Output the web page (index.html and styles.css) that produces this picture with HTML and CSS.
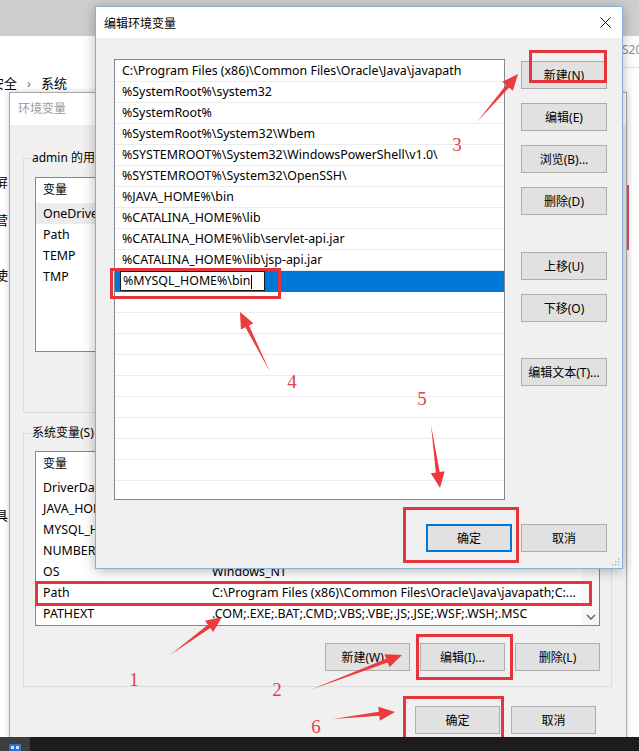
FILE: index.html
```html
<!DOCTYPE html>
<html lang="zh-CN">
<head>
<meta charset="utf-8">
<title>编辑环境变量</title>
<link rel="stylesheet" href="styles.css">
</head>
<body>
<div class="screen">
  <div class="workspace">
    <div class="settings">
      <div class="settings-top"></div>
      <div class="settings-head"><span class="settings-ver">S20</span></div>
      <div class="crumb"><span>安全</span><span class="crumb-sep">›</span><span>系统</span></div>
      <ul class="nav">
        <li class="nav-a">屏</li>
        <li class="nav-b">营</li>
        <li class="nav-c">使</li>
        <li class="nav-d">具</li>
      </ul>
    </div>

    <section class="win win-env">
      <header class="env-title">环境变量</header>
      <div class="env-body">
        <fieldset class="group group-user">
          <legend>admin 的用户变量(U)</legend>
          <div class="lv">
            <div class="lv-main">
              <div class="lv-row lv-head"><span>变量</span><span></span></div>
              <div class="lv-row lv-sel"><span>OneDrive</span><span></span></div>
              <div class="lv-row"><span>Path</span><span></span></div>
              <div class="lv-row"><span>TEMP</span><span></span></div>
              <div class="lv-row"><span>TMP</span><span></span></div>
            </div>
          </div>
        </fieldset>

        <fieldset class="group group-sys">
          <legend>系统变量(S)</legend>
          <div class="lv">
            <div class="lv-main">
              <div class="lv-row lv-head"><span>变量</span><span></span></div>
              <div class="lv-row"><span>DriverData</span><span></span></div>
              <div class="lv-row"><span>JAVA_HOME</span><span></span></div>
              <div class="lv-row"><span>MYSQL_HOME</span><span></span></div>
              <div class="lv-row"><span>NUMBER_OF_PROCESSORS</span><span></span></div>
              <div class="lv-row"><span>OS</span><span>Windows_NT</span></div>
              <div class="lv-row"><span>Path</span><span>C:\Program Files (x86)\Common Files\Oracle\Java\javapath;C:...</span></div>
              <div class="lv-row"><span>PATHEXT</span><span>.COM;.EXE;.BAT;.CMD;.VBS;.VBE;.JS;.JSE;.WSF;.WSH;.MSC</span></div>
            </div>
            <div class="lv-scroll">
              <div class="lv-scroll-btn">
                <svg class="chev" width="10" height="6" viewBox="0 0 10 6"><polyline points="1,1 5,5 9,1"/></svg>
              </div>
            </div>
          </div>
          <div class="btn-row">
            <button class="btn">新建(W)...</button>
            <button class="btn">编辑(I)...</button>
            <button class="btn">删除(L)</button>
          </div>
        </fieldset>

        <div class="env-foot">
          <button class="btn">确定</button>
          <button class="btn">取消</button>
        </div>
      </div>
    </section>

    <section class="win win-edit">
      <header class="edit-title">
        <span>编辑环境变量</span>
        <svg class="close" width="11" height="11" viewBox="0 0 11 11"><line x1="0.5" y1="0.5" x2="10.5" y2="10.5"/><line x1="10.5" y1="0.5" x2="0.5" y2="10.5"/></svg>
      </header>
      <div class="edit-body">
        <div class="edit-main">
          <div class="elist">
            <div class="erow">C:\Program Files (x86)\Common Files\Oracle\Java\javapath</div>
            <div class="erow">%SystemRoot%\system32</div>
            <div class="erow">%SystemRoot%</div>
            <div class="erow">%SystemRoot%\System32\Wbem</div>
            <div class="erow">%SYSTEMROOT%\System32\WindowsPowerShell\v1.0\</div>
            <div class="erow">%SYSTEMROOT%\System32\OpenSSH\</div>
            <div class="erow">%JAVA_HOME%\bin</div>
            <div class="erow">%CATALINA_HOME%\lib</div>
            <div class="erow">%CATALINA_HOME%\lib\servlet-api.jar</div>
            <div class="erow">%CATALINA_HOME%\lib\jsp-api.jar</div>
            <div class="erow erow-sel"><span class="eedit">%MYSQL_HOME%\bin<span class="caret"></span></span></div>
            <div class="erow"></div>
            <div class="erow"></div>
            <div class="erow"></div>
            <div class="erow"></div>
            <div class="erow"></div>
            <div class="erow"></div>
            <div class="erow"></div>
            <div class="erow"></div>
            <div class="erow"></div>
            <div class="erow"></div>
            <div class="erow"></div>
          </div>
          <div class="ebtns">
            <button class="btn">新建(N)</button>
            <button class="btn">编辑(E)</button>
            <button class="btn">浏览(B)...</button>
            <button class="btn">删除(D)</button>
            <button class="btn ebtn-gap1">上移(U)</button>
            <button class="btn">下移(O)</button>
            <button class="btn ebtn-gap2">编辑文本(T)...</button>
          </div>
        </div>
        <div class="edit-foot">
          <button class="btn btn-default">确定</button>
          <button class="btn">取消</button>
        </div>
      </div>
      <svg class="grip" width="9" height="9" viewBox="0 0 9 9">
        <rect x="7" y="1" width="1.5" height="1.5"/>
        <rect x="4" y="4" width="1.5" height="1.5"/><rect x="7" y="4" width="1.5" height="1.5"/>
        <rect x="1" y="7" width="1.5" height="1.5"/><rect x="4" y="7" width="1.5" height="1.5"/><rect x="7" y="7" width="1.5" height="1.5"/>
      </svg>
    </section>

    <svg class="marks" width="639" height="737" viewBox="0 0 639 737">
      <line class="mk-edge" x1="628" y1="185" x2="628" y2="250"/>
      <rect class="mk-box" x="530.5" y="51.5" width="75" height="30"/>
      <rect class="mk-box" x="111.5" y="269.5" width="168" height="28"/>
      <rect class="mk-box" x="404.5" y="508.5" width="113" height="53"/>
      <rect class="mk-box" x="36.5" y="582.5" width="554" height="22"/>
      <rect class="mk-box" x="417.5" y="635.5" width="94" height="43"/>
      <rect class="mk-box" x="404.5" y="697.5" width="98" height="50"/>
      <polygon class="mk-arrow" points="477,122 509.1,87.5 512.9,90.8 518,74 502.3,81.7 506.1,84.9"/>
      <polygon class="mk-arrow" points="270,372 249,325.4 253.4,323.2 240,312 240.9,329.4 245.4,327.2"/>
      <polygon class="mk-arrow" points="431,425 435.8,472.4 430.8,473.2 440,488 444.7,471.2 439.7,471.9"/>
      <polygon class="mk-arrow" points="170,655 210.3,628 213.2,632.1 222,617 205,620.8 207.9,624.8"/>
      <polygon class="mk-arrow" points="310,690 387.7,662.6 389.5,667.2 402,655 384.5,654.2 386.3,658.8"/>
      <polygon class="mk-arrow" points="333,719 379.3,715.8 379.9,720.8 395,712 378.3,706.8 378.9,711.8"/>
      <text class="mk-num" x="457" y="151">3</text>
      <text class="mk-num" x="292" y="388">4</text>
      <text class="mk-num" x="422" y="405">5</text>
      <text class="mk-num" x="134" y="686">1</text>
      <text class="mk-num" x="277" y="696">2</text>
      <text class="mk-num" x="316" y="733">6</text>
    </svg>
  </div>
  <footer class="taskbar">
    <div class="task-start">
      <svg class="task-icon" width="12" height="7" viewBox="0 0 12 7"><rect class="ti-a" x="0" y="0" width="12" height="7"/><rect class="ti-b" x="2" y="2" width="3" height="3"/><rect class="ti-b" x="7" y="2" width="3" height="3"/></svg>
    </div>
  </footer>
</div>
</body>
</html>
```

FILE: styles.css
```css
* { box-sizing: border-box; }
html, body { margin: 0; padding: 0; }
body {
  width: 639px; height: 751px; overflow: hidden; background: #fff;
  font-family: "Noto Sans", "Noto Sans CJK SC", sans-serif;
  font-size: 12px; color: #000;
}
.screen { display: flex; flex-direction: column; width: 639px; height: 751px; }
.workspace { position: relative; flex: 1; overflow: hidden; }

/* background settings window */
.settings { height: 100%; background: #fff; display: flex; flex-direction: column; }
.settings-top { height: 36px; background: #cecece; flex: none; }
.settings-head { height: 32px; display: flex; justify-content: flex-end; flex: none; }
.settings-ver { width: 17px; border-bottom: 1px solid #e2e2e2; color: #8c8c8c; line-height: 28px; white-space: nowrap; overflow: hidden; }
.crumb { display: flex; gap: 10px; margin-left: -9px; height: 30px; line-height: 30px; font-size: 13px; flex: none; }
.crumb-sep { color: #777; }
.nav { list-style: none; margin: 0 0 0 -5px; padding: 0; width: 14px; font-size: 13px; }
.nav li { height: 24px; line-height: 24px; white-space: nowrap; }
.nav-a { margin-top: 72px; }
.nav-b { margin-top: 14px; }
.nav-c { margin-top: 31px; }
.nav-d { margin-top: 216px; }

/* windows */
.win { position: absolute; display: flex; flex-direction: column; }
.btn {
  width: 85px; height: 28px; margin: 0; padding: 0;
  border: 1px solid #adadad; background: #e1e1e1;
  font: inherit; color: #000; white-space: nowrap;
}

.win-env {
  left: 9px; top: 92px; width: 618px; height: 660px;
  background: #f0f0f0; border: 1px solid #a9a9a9;
  box-shadow: 0 0 6px rgba(0,0,0,.18);
}
.env-title { height: 32px; line-height: 32px; padding-left: 8px; background: #fff; color: #9b9b9b; flex: none; }
.env-body { padding: 25px 14px 0 13px; display: flex; flex-direction: column; }
.group { margin: 0; padding: 0 11px 15px; border: 1px solid #dcdcdc; min-width: 0; }
.group-user { padding-bottom: 60px; }
.group legend { margin-left: -4px; padding: 0 1px; line-height: 16px; }
.group-sys { margin-top: 12px; }
.lv { margin-top: 11px; height: 175px; border: 1px solid #828790; background: #fff; display: flex; overflow: hidden; }
.group-sys .lv { margin-top: 10px; }
.lv-main { flex: 1; min-width: 0; }
.lv-row { display: grid; grid-template-columns: 175px 1fr; height: 21px; line-height: 21px; white-space: nowrap; font-size: 12.4px; }
.lv-row span { overflow: hidden; }
.lv-row span:first-child { padding-left: 7px; }
.lv-row span + span { padding-left: 1px; }
.lv-head { height: 25px; line-height: 24px; font-size: 12px; }
.lv-sel { background: #ececec; }
.lv-scroll { width: 17px; flex: none; background: #f7f7f7; display: flex; flex-direction: column; justify-content: flex-end; }
.lv-scroll-btn { height: 17px; display: flex; align-items: center; justify-content: center; }
.chev { fill: none; stroke: #606060; stroke-width: 1.4; }
.btn-row { display: flex; justify-content: flex-end; gap: 10px; margin-top: 17px; }
.env-foot { display: flex; justify-content: flex-end; gap: 11px; margin-top: 19px; padding-right: 16px; }

.win-edit {
  left: 95px; top: 6px; width: 528px; height: 563px;
  background: #f0f0f0; border: 1px solid #8aaed2;
  box-shadow: 0 2px 12px rgba(0,0,0,.28);
}
.edit-title { height: 31px; background: #fff; display: flex; align-items: center; justify-content: space-between; padding: 0 11px 0 8px; flex: none; }
.close { stroke: #111; stroke-width: 1; }
.edit-body { flex: 1; padding: 21px 15px 0 18px; display: flex; flex-direction: column; }
.edit-main { display: flex; gap: 16px; }
.elist { width: 391px; height: 441px; border: 1px solid #828790; background: #fff; padding-top: 1px; overflow: hidden; flex: none; font-size: 12.4px; }
.erow { height: 21px; line-height: 20px; border-bottom: 1px solid #ececec; padding-left: 7px; white-space: nowrap; }
.erow-sel { background: #0078d7; border-bottom-color: #0078d7; padding-left: 5px; }
.eedit { display: inline-block; vertical-align: top; width: 145px; height: 20px; line-height: 18px; border: 1px solid #1a1a1a; background: #fff; padding-left: 2px; }
.caret { display: inline-block; width: 1px; height: 14px; background: #000; vertical-align: middle; margin-left: 1px; }
.ebtns { width: 86px; display: flex; flex-direction: column; gap: 14px; padding-top: 2px; flex: none; }
.ebtns .btn { width: 86px; }
.ebtn-gap1 { margin-top: 23px; }
.ebtn-gap2 { margin-top: 22px; }
.edit-foot { display: flex; justify-content: flex-end; gap: 9px; margin-top: 24px; }
.edit-foot .btn { width: 86px; }
.btn-default { border: 2px solid #0078d7; }
.grip { position: absolute; right: 2px; bottom: 2px; fill: #b4b4b4; }

/* annotations */
.marks { position: absolute; left: 0; top: 0; pointer-events: none; }
.mk-box { fill: none; stroke: #e4343c; stroke-width: 3; }
.mk-arrow { fill: #ec3b3f; }
.mk-edge { stroke: #c8485a; stroke-width: 2; }
.mk-num { fill: #e2404e; font-family: "Liberation Serif", serif; font-size: 19px; text-anchor: middle; }

/* taskbar */
.taskbar { flex: none; height: 14px; background: #1c1c1c; display: flex; }
.task-start { width: 30px; background: #3d3d3d; display: flex; justify-content: center; padding-top: 7px; }
.ti-a { fill: #2f6fcf; }
.ti-b { fill: #cfe2ff; }
```
